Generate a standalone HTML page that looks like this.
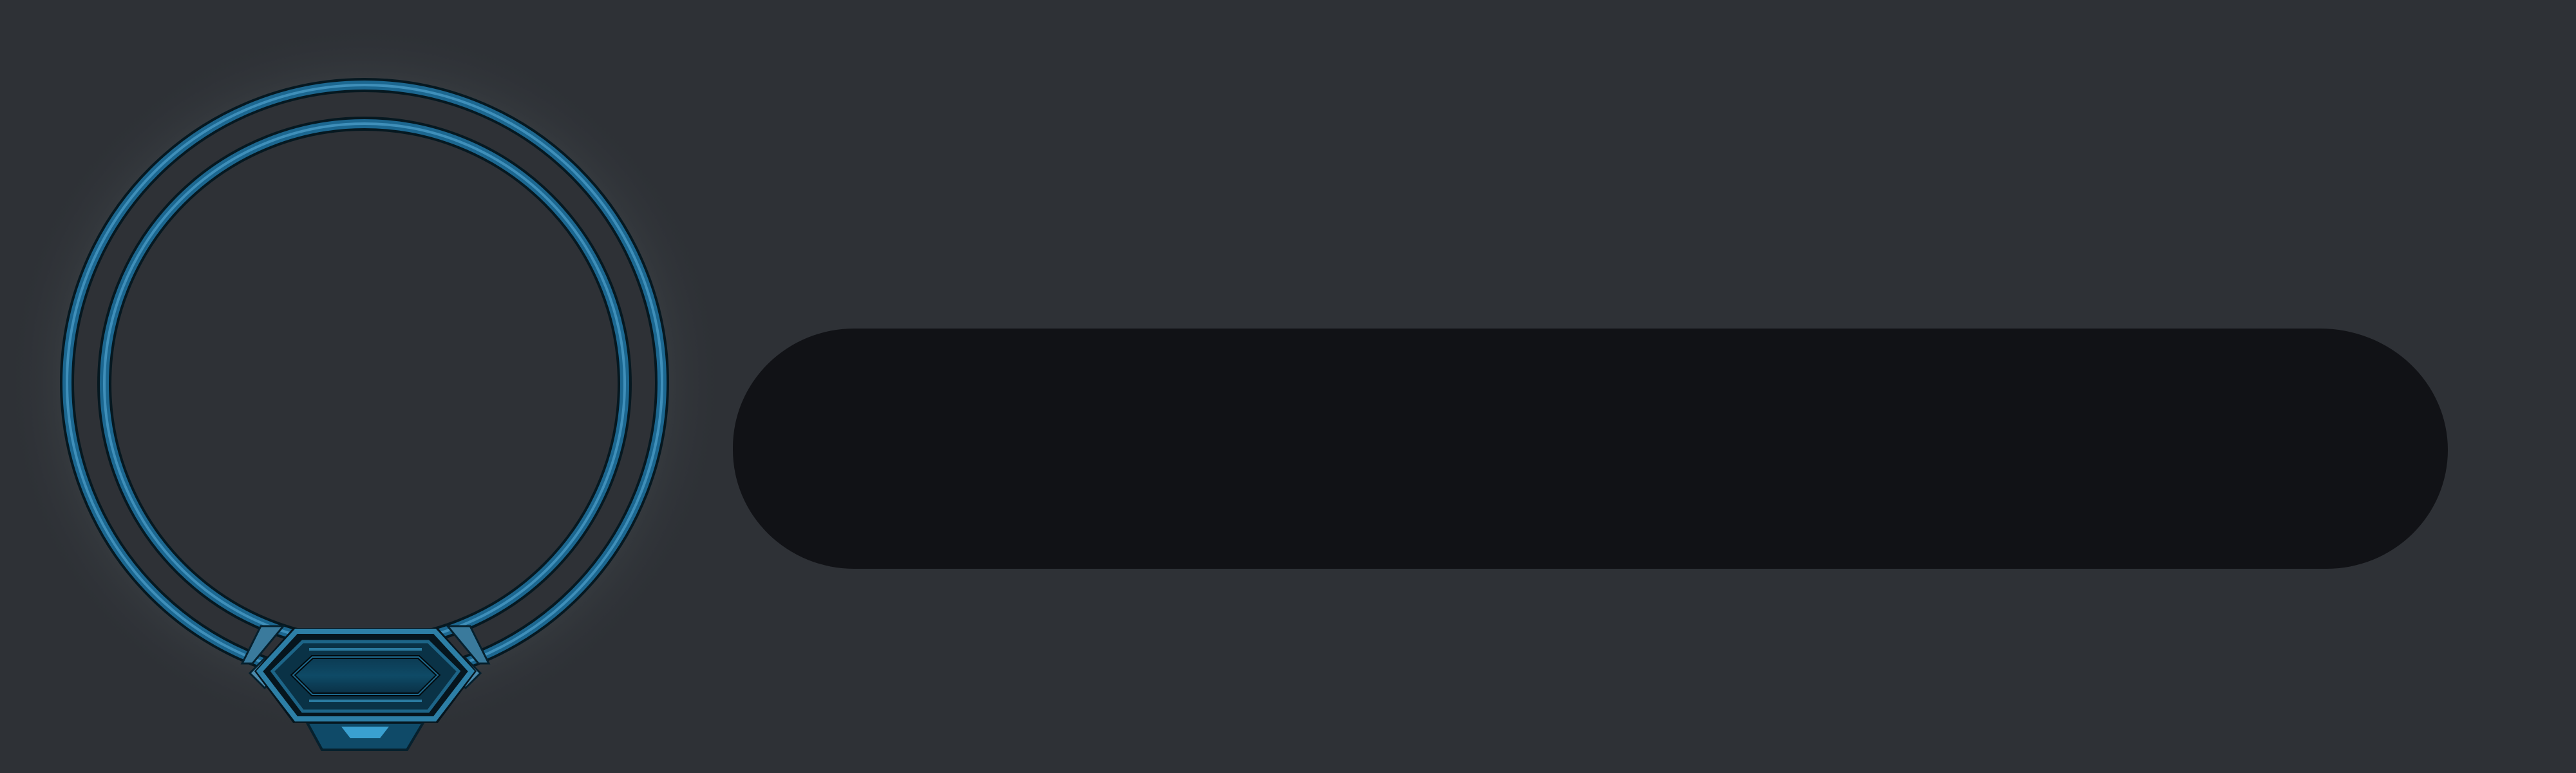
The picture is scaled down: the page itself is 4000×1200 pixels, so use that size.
<!DOCTYPE html>
<html><head><style>
html,body{margin:0;padding:0;width:4000px;height:1200px;background:#2e3136;overflow:hidden}
.bar{position:absolute;left:1138px;top:510px;width:2663px;height:373px;background:#111216;border-radius:190px 200px 190px 190px/186px 190px 186px 186px}
svg{position:absolute;left:0;top:0}
</style></head><body>
<div class="bar"></div>
<svg width="1200" height="1200" viewBox="0 0 1200 1200">
<defs>
<radialGradient id="glow" cx="566" cy="594" r="560" gradientUnits="userSpaceOnUse">
<stop offset="0.78" stop-color="#4a5257" stop-opacity="0.6"/>
<stop offset="0.86" stop-color="#3c4246" stop-opacity="0.35"/>
<stop offset="1" stop-color="#2e3136" stop-opacity="0"/>
</radialGradient>
<linearGradient id="plate" x1="0" y1="0" x2="0" y2="1">
<stop offset="0" stop-color="#0c3a52"/><stop offset="0.5" stop-color="#0e4a66"/><stop offset="1" stop-color="#0a2f44"/>
</linearGradient>
</defs>
<circle cx="566" cy="594" r="560" fill="url(#glow)"/>
<circle cx="566" cy="594" r="472" fill="#2e3136"/>
<g fill="none">
<circle cx="566" cy="594" r="462" stroke="#061820" stroke-width="22"/>
<circle cx="566" cy="594" r="462" stroke="#1c6790" stroke-width="14"/>
<circle cx="566" cy="594" r="462" stroke="#3f8fba" stroke-width="4"/>
<circle cx="566" cy="596" r="404" stroke="#061820" stroke-width="22"/>
<circle cx="566" cy="596" r="404" stroke="#1c6790" stroke-width="14"/>
<circle cx="566" cy="596" r="404" stroke="#3f8fba" stroke-width="4"/>
</g>
<!-- bottom pendant -->
<polygon points="477,1122 657,1122 632,1164 500,1164" fill="#0f4a68" stroke="#06202d" stroke-width="4"/>
<polygon points="530,1128 604,1128 590,1146 544,1146" fill="#3aa0d0"/>
<!-- side brackets -->
<polygon points="405,972 440,972 392,1030 376,1030" fill="#3a7a9c" stroke="#06202d" stroke-width="3"/>
<polygon points="730,972 695,972 743,1030 759,1030" fill="#3a7a9c" stroke="#06202d" stroke-width="3"/>
<polygon points="411,1022 434,1045 411,1068 388,1045" fill="#4b8aac" stroke="#06202d" stroke-width="3"/>
<rect x="405" y="1039" width="12" height="12" fill="#06151d"/>
<polygon points="723,1022 746,1045 723,1068 700,1045" fill="#4b8aac" stroke="#06202d" stroke-width="3"/>
<rect x="717" y="1039" width="12" height="12" fill="#06151d"/>
<!-- main plate -->
<polygon points="455,975 680,975 740,1042 680,1122 455,1122 395,1042" fill="#06151d"/>
<polygon points="460,980 675,980 732,1042 675,1116 460,1116 403,1042" fill="none" stroke="#2d7fa6" stroke-width="8"/>
<polygon points="470,996 665,996 712,1042 665,1104 470,1104 423,1042" fill="#0a3246" stroke="#1d6588" stroke-width="5"/>
<polygon points="485,1020 650,1020 680,1048 650,1078 485,1078 455,1048" fill="url(#plate)" stroke="#02090d" stroke-width="6"/>
<polygon points="485,1020 650,1020 680,1048 650,1078 485,1078 455,1048" fill="none" stroke="#1e6a8e" stroke-width="2"/>
<line x1="480" y1="1088" x2="655" y2="1088" stroke="#2a7aa0" stroke-width="4"/>
<line x1="480" y1="1008" x2="655" y2="1008" stroke="#2a7aa0" stroke-width="4"/>
</svg>
</body></html>
